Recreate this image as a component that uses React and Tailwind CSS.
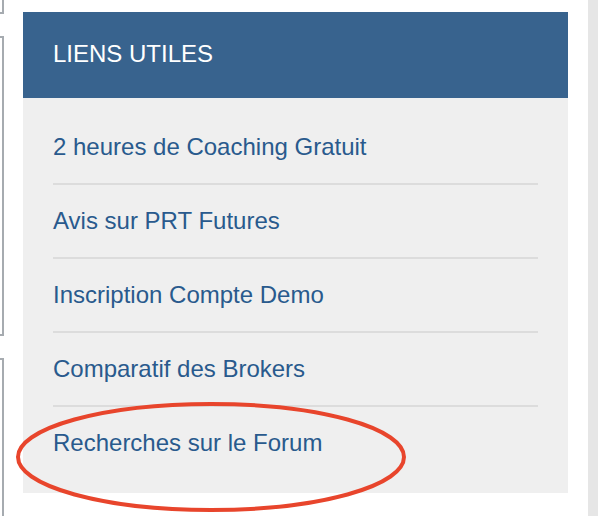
import React from "react";

const links = [
  "2 heures de Coaching Gratuit",
  "Avis sur PRT Futures",
  "Inscription Compte Demo",
  "Comparatif des Brokers",
  "Recherches sur le Forum",
];

export default function App() {
  return (
    <div
      className="relative flex h-[516px] w-[598px] overflow-hidden bg-white"
      style={{ fontFamily: '"Liberation Sans", Arial, Helvetica, sans-serif' }}
    >
      <div className="flex w-[4px] shrink-0 flex-col">
        <div className="h-[14px] border-b-2 border-r-2 border-[#a6abb0]" />
        <div className="mt-[22px] h-[300px] border-y-2 border-r-2 border-[#a6abb0]" />
        <div className="mt-[22px] flex-1 border-t-2 border-r-2 border-[#a6abb0]" />
      </div>

      <div className="ml-[19px] mt-[12px] w-[545px] shrink-0 self-start">
        <div className="h-[86px] bg-[#38638e] pl-[30px] pt-[28px] text-[24px] leading-[28px] text-white">
          LIENS UTILES
        </div>
        <div className="bg-[#efefef] px-[30px] pt-[13px] pb-[14px]">
          {links.map((l, i) => (
            <div
              key={l}
              className={
                i < links.length - 1
                  ? "border-b-2 border-[#dcdcdc] py-[22px]"
                  : "py-[22px]"
              }
            >
              <a className="block text-[24px] leading-[28px] text-[#295a8d]">{l}</a>
            </div>
          ))}
        </div>
      </div>

      <div className="ml-auto w-[10px] shrink-0 bg-[#e6e6e6]" />

      <svg
        className="pointer-events-none absolute left-0 top-0"
        width="598"
        height="516"
        viewBox="0 0 598 516"
      >
        <ellipse
          cx="211"
          cy="457"
          rx="193"
          ry="53"
          fill="none"
          stroke="#e8452c"
          strokeWidth="4"
        />
      </svg>
    </div>
  );
}
